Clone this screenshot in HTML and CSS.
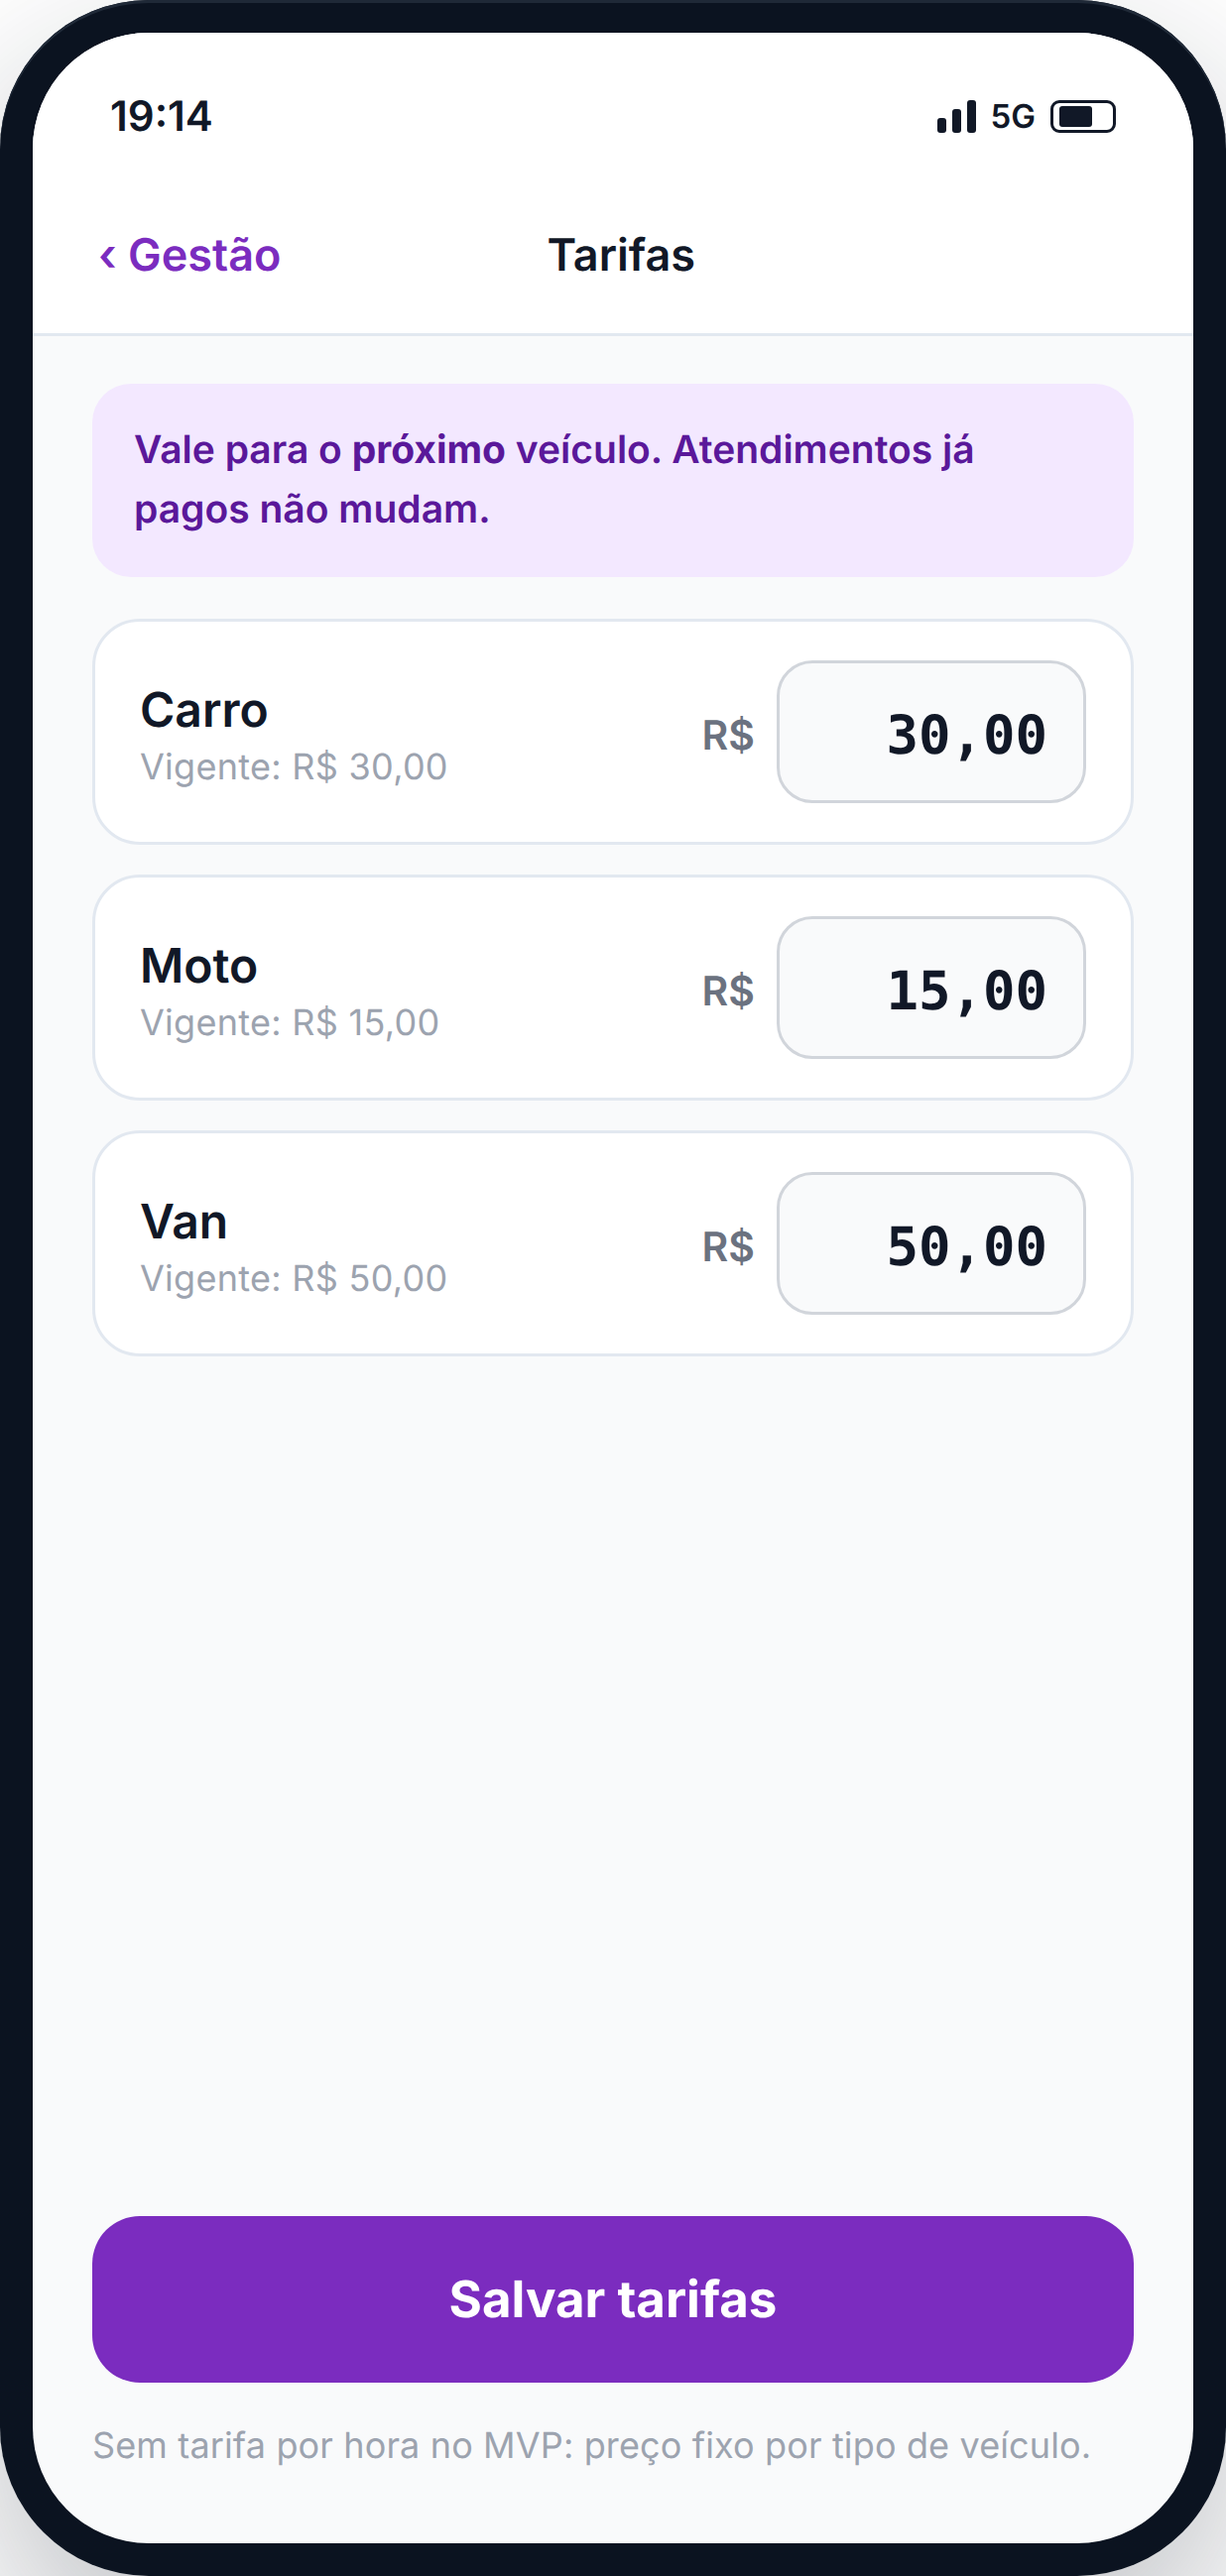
FILE: index.html
```html
<!DOCTYPE html>
<html lang="pt-BR">
<head>
    <meta charset="UTF-8">
    <meta name="viewport" content="width=device-width, initial-scale=1.0">
    <title>Tarifas</title>
    <link rel="stylesheet" href="styles.css">
</head>
<body>

<div class="phone">
    <div class="screen">
        <div class="top-area">
            <div class="status-bar">
                <span class="clock">19:14</span>
                <div class="status-icons">
                    <div class="signal">
                        <span class="bar bar-1"></span>
                        <span class="bar bar-2"></span>
                        <span class="bar bar-3"></span>
                    </div>
                    <span class="network">5G</span>
                    <div class="battery"><span class="battery-level"></span></div>
                </div>
            </div>
            <div class="nav-bar">
                <span class="back-link">‹ Gestão</span>
                <span class="nav-title">Tarifas</span>
                <span class="nav-spacer"></span>
            </div>
        </div>

        <div class="content">
            <p class="notice">Vale para o <strong>próximo</strong> veículo. Atendimentos já pagos não mudam.</p>

            <div class="rate-list">
                <div class="rate-card">
                    <div class="rate-info">
                        <div class="rate-name">Carro</div>
                        <div class="rate-current">Vigente: R$ 30,00</div>
                    </div>
                    <div class="rate-edit">
                        <span class="currency">R$</span>
                        <div class="rate-input">30,00</div>
                    </div>
                </div>
                <div class="rate-card">
                    <div class="rate-info">
                        <div class="rate-name">Moto</div>
                        <div class="rate-current">Vigente: R$ 15,00</div>
                    </div>
                    <div class="rate-edit">
                        <span class="currency">R$</span>
                        <div class="rate-input">15,00</div>
                    </div>
                </div>
                <div class="rate-card">
                    <div class="rate-info">
                        <div class="rate-name">Van</div>
                        <div class="rate-current">Vigente: R$ 50,00</div>
                    </div>
                    <div class="rate-edit">
                        <span class="currency">R$</span>
                        <div class="rate-input">50,00</div>
                    </div>
                </div>
            </div>

            <button class="save-button">Salvar tarifas</button>
            <p class="footnote">Sem tarifa por hora no MVP: preço fixo por tipo de veículo.</p>
        </div>
    </div>
</div>

</body>
</html>
```

FILE: styles.css
```css
* {
    box-sizing: border-box;
}
body {
    margin: 0;
    background-color: #fff;
    font-family: Inter, "Liberation Sans", sans-serif;
    color: #111827;
    overflow: hidden;
    text-rendering: geometricPrecision;
}
.phone {
    width: 1236px;
    height: 2598px;
    padding: 33px;
    background-color: #0b1320;
    border-radius: 150px;
    box-shadow: inset 0 3px 0 #1f2937, 0 72px 180px rgba(17, 24, 39, 0.28);
}
.screen {
    height: 100%;
    display: flex;
    flex-direction: column;
    background-color: #f9fafb;
    border-radius: 117px;
    overflow: hidden;
}

/* status bar + nav */
.top-area {
    height: 306px;
    flex-shrink: 0;
    background-color: #fff;
    border-bottom: 3px solid #e2e8f0;
}
.status-bar {
    height: 108px;
    padding: 0 78px;
    display: flex;
    justify-content: space-between;
    align-items: center;
    margin-top: 30px;
}
.clock {
    font-size: 42px;
    font-weight: 600;
}
.status-icons {
    display: flex;
    align-items: center;
}
.signal {
    display: flex;
    align-items: flex-end;
    gap: 6px;
    height: 33px;
}
.bar {
    width: 9px;
    background-color: #111827;
    border-radius: 3px;
}
.bar-1 { height: 15px; }
.bar-2 { height: 24px; }
.bar-3 { height: 33px; }
.network {
    margin-left: 15px;
    font-size: 33px;
    font-weight: 600;
}
.battery {
    width: 66px;
    height: 33px;
    margin-left: 15px;
    padding: 3px 6px;
    border: 3px solid #111827;
    border-radius: 9px;
}
.battery-level {
    display: block;
    width: 33px;
    height: 100%;
    background-color: #111827;
    border-radius: 3px;
}
.nav-bar {
    height: 165px;
    padding: 6px 66px 0;
    display: flex;
    justify-content: space-between;
    align-items: center;
}
.back-link {
    font-size: 45px;
    font-weight: 600;
    color: #7b2cbf;
}
.nav-title {
    font-size: 45px;
    font-weight: 600;
}
.nav-spacer {
    width: 168px;
}

/* page body */
.content {
    flex: 1;
    display: flex;
    flex-direction: column;
    padding: 48px 60px 75px;
}
.notice {
    margin: 0 0 42px;
    padding: 37px 42px 38px;
    background-color: #f3e8ff;
    border-radius: 39px;
    font-size: 39px;
    font-weight: 600;
    line-height: 60px;
    color: #5a189a;
}
.notice strong {
    font-weight: 700;
}
.rate-list {
    display: flex;
    flex-direction: column;
    gap: 30px;
}
.rate-card {
    height: 228px;
    padding: 0 45px;
    display: flex;
    justify-content: space-between;
    align-items: center;
    background-color: #fff;
    border: 3px solid #e2e8f0;
    border-radius: 48px;
}
.rate-info {
    padding-top: 6px;
}
.rate-name {
    font-size: 48px;
    font-weight: 600;
    line-height: 60px;
}
.rate-current {
    margin-top: 3px;
    font-size: 36px;
    line-height: 48px;
    letter-spacing: 0.28px;
    color: #9ca3af;
}
.rate-edit {
    display: flex;
    align-items: center;
    gap: 22px;
}
.currency {
    padding-top: 6px;
    font-size: 41px;
    font-weight: 600;
    color: #6b7280;
}
.rate-input {
    width: 312px;
    height: 144px;
    padding: 6px 36px 0;
    display: flex;
    justify-content: flex-end;
    align-items: center;
    background-color: #f9fafb;
    border: 3px solid #d1d5db;
    border-radius: 36px;
    font-family: "DejaVu Sans Mono", "Liberation Mono", monospace;
    font-size: 54px;
    font-weight: 700;
}
.save-button {
    height: 168px;
    margin-top: auto;
    border: none;
    border-radius: 48px;
    background-color: #7b2cbf;
    color: #fff;
    font-family: inherit;
    font-size: 51px;
    font-weight: 700;
    text-rendering: inherit;
}
.footnote {
    margin: 39px 0 0;
    font-size: 36px;
    line-height: 48px;
    letter-spacing: 0.14px;
    color: #9ca3af;
}
```
